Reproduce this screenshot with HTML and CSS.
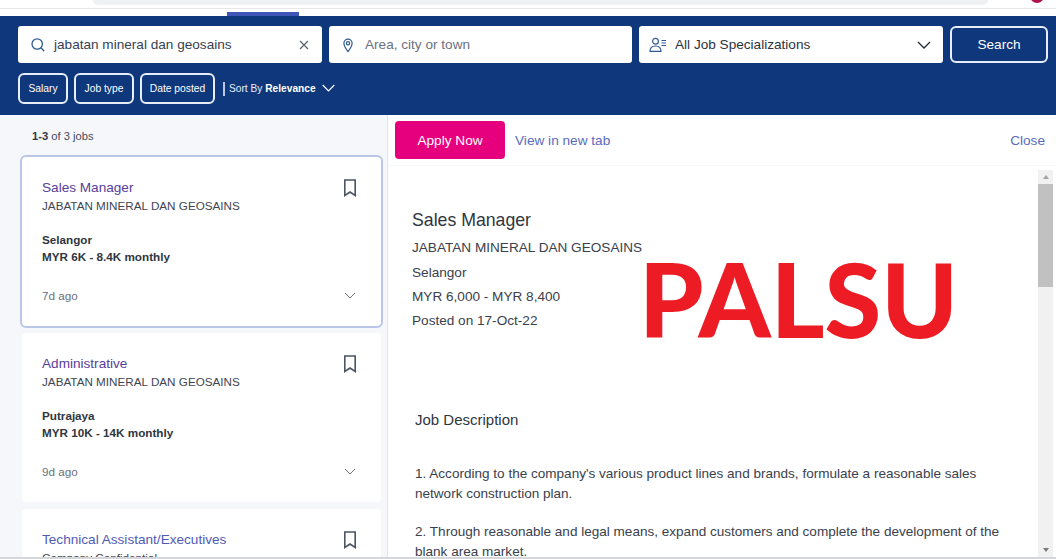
FILE: index.html
```html
<!DOCTYPE html>
<html lang="en">
<head>
<meta charset="utf-8">
<title>Job search</title>
<link rel="stylesheet" href="styles.css">
</head>
<body>
<div class="page">
  <div class="chrome">
    <div class="chrome-top">
      <div class="urlbar"></div>
      <div class="avatar"></div>
    </div>
    <div class="chrome-line"></div>
    <div class="tab-mark"></div>
  </div>

  <header class="band">
    <div class="search-row">
      <div class="field field-what">
        <svg class="ico" width="16" height="16" viewBox="0 0 16 16" fill="none" stroke="#2f5a92" stroke-width="1.3"><circle cx="7.2" cy="7" r="5.2"/><path d="M11 10.8l3.2 3.4"/></svg>
        <span class="field-text">jabatan mineral dan geosains</span>
        <svg class="clear" width="12" height="12" viewBox="0 0 12 12" fill="none" stroke="#5a6270" stroke-width="1.2"><path d="M2 2l8 8M10 2l-8 8"/></svg>
      </div>
      <div class="field field-where">
        <svg class="ico" width="16" height="16" viewBox="0 0 16 16" fill="none" stroke="#2f5a92" stroke-width="1.2"><path d="M8 14.6C5.6 11.4 3.9 9 3.9 6.2a4.1 4.1 0 0 1 8.2 0C12.100 9 10.400 11.400 8 14.600z"/><circle cx="8" cy="6.200" r="1.600"/></svg>
        <span class="field-text placeholder">Area, city or town</span>
      </div>
      <div class="field field-spec">
        <svg class="ico-spec" width="18" height="16" viewBox="0 0 18 16" fill="none" stroke="#2f5a92" stroke-width="1.2"><circle cx="6.500" cy="4.200" r="2.900"/><path d="M1 14.400c0-3.800 2.300-5.400 5.500-5.400s5.500 1.600 5.500 5.400z"/><path d="M12.500 3.500h4.500M12.500 6h4.500M12.500 8.500h4.500"/></svg>
        <span class="field-text spec-text">All Job Specializations</span>
        <svg class="spec-chev" width="14" height="8" viewBox="0 0 14 8" fill="none" stroke="#1f2a37" stroke-width="1.300"><path d="M1 1l6 6 6-6"/></svg>
      </div>
      <button class="search-btn">Search</button>
    </div>
    <div class="filter-row">
      <button class="chip chip-salary">Salary</button>
      <button class="chip chip-type">Job type</button>
      <button class="chip chip-date">Date posted</button>
      <span class="sep"></span>
      <span class="sort">Sort By <b>Relevance</b></span>
      <svg class="sort-chev" width="13" height="8" viewBox="0 0 13 8" fill="none" stroke="#fff" stroke-width="1.200"><path d="M.7 1l5.800 5.800L12.300 1"/></svg>
    </div>
  </header>

  <main class="main">
    <aside class="list">
      <p class="count"><b>1-3</b> of 3 jobs</p>

      <article class="card card-active">
        <div class="card-head">
          <a class="job-title visited">Sales Manager</a>
          <svg class="bookmark" width="14" height="18" viewBox="0 0 14 18" fill="none" stroke="#4b5563" stroke-width="1.600"><path d="M1.800 1h10.400v15.500L7 13l-5.200 3.500z"/></svg>
        </div>
        <p class="company">JABATAN MINERAL DAN GEOSAINS</p>
        <p class="meta first">Selangor</p>
        <p class="meta">MYR 6K - 8.4K monthly</p>
        <div class="card-foot">
          <span class="age">7d ago</span>
          <svg class="chev" width="12" height="7" viewBox="0 0 12 7" fill="none" stroke="#6b7280" stroke-width="1"><path d="M1 1l5 5 5-5"/></svg>
        </div>
      </article>

      <article class="card">
        <div class="card-head">
          <a class="job-title visited">Administrative</a>
          <svg class="bookmark" width="14" height="18" viewBox="0 0 14 18" fill="none" stroke="#4b5563" stroke-width="1.600"><path d="M1.800 1h10.400v15.500L7 13l-5.200 3.500z"/></svg>
        </div>
        <p class="company">JABATAN MINERAL DAN GEOSAINS</p>
        <p class="meta first">Putrajaya</p>
        <p class="meta">MYR 10K - 14K monthly</p>
        <div class="card-foot">
          <span class="age">9d ago</span>
          <svg class="chev" width="12" height="7" viewBox="0 0 12 7" fill="none" stroke="#6b7280" stroke-width="1"><path d="M1 1l5 5 5-5"/></svg>
        </div>
      </article>

      <article class="card">
        <div class="card-head">
          <a class="job-title">Technical Assistant/Executives</a>
          <svg class="bookmark" width="14" height="18" viewBox="0 0 14 18" fill="none" stroke="#4b5563" stroke-width="1.600"><path d="M1.800 1h10.400v15.500L7 13l-5.200 3.500z"/></svg>
        </div>
        <p class="company">Company Confidential</p>
      </article>
    </aside>

    <section class="detail">
      <div class="detail-head">
        <button class="apply">Apply Now</button>
        <a class="link new-tab">View in new tab</a>
        <a class="link close">Close</a>
      </div>
      <div class="detail-body">
        <div class="detail-content">
          <div class="summary">
            <h1 class="detail-title">Sales Manager</h1>
            <p class="summary-line summary-company">JABATAN MINERAL DAN GEOSAINS</p>
            <p class="summary-line">Selangor</p>
            <p class="summary-line">MYR 6,000 - MYR 8,400</p>
            <p class="summary-line">Posted on 17-Oct-22</p>
            <div class="stamp">PALSU</div>
          </div>
          <div class="description">
            <h2 class="desc-title">Job Description</h2>
            <p class="desc-text">1. According to the company's various product lines and brands, formulate a reasonable sales network construction plan.</p>
            <p class="desc-text">2. Through reasonable and legal means, expand customers and complete the development of the blank area market.</p>
          </div>
        </div>
        <div class="scrollbar">
          <span class="arrow arrow-up"></span>
          <span class="thumb"></span>
          <span class="arrow arrow-down"></span>
        </div>
      </div>
    </section>
  </main>
  <div class="bottom-line"></div>
</div>
</body>
</html>
```

FILE: styles.css
```css
* { box-sizing: border-box; }
html, body { margin: 0; padding: 0; height: 100%; overflow: hidden; background: #fff; }
body { font-family: "Liberation Sans", Arial, sans-serif; color: #2f3640; }
p, h1, h2 { margin: 0; font-weight: 400; }
button { font-family: inherit; cursor: pointer; }

.page { width: 1056px; height: 559px; display: flex; flex-direction: column; overflow: hidden; }

/* browser strip */
.chrome { height: 16px; flex: none; overflow: hidden; }
.chrome-top { height: 8px; display: flex; overflow: hidden; }
.urlbar { width: 895px; height: 5px; margin-left: 93px; background: #f0f1f3; border-bottom-left-radius: 8px; border-bottom-right-radius: 8px; }
.avatar { width: 14px; height: 14px; margin: -11px 0 0 42px; border-radius: 50%; background: #b0124f; flex: none; }
.chrome-line { height: 1px; background: #e8e8e8; }
.tab-mark { width: 72px; height: 4px; margin: 3px 0 0 227px; background: #3f56b8; }

/* search band */
.band { height: 99px; flex: none; background: #0f377c; padding: 10px 8px 0 18px; }
.search-row { display: flex; height: 37px; gap: 7px; }
.field { background: #fff; border-radius: 3px; display: flex; align-items: center; height: 37px; flex: none; }
.field-what { width: 304px; padding: 0 12px 0 12px; }
.field-where { width: 303px; padding: 0 0 0 11px; }
.field-spec { width: 304px; padding: 0 12px 0 10px; }
.ico { flex: none; }
.ico-spec { flex: none; }
.field-text { font-size: 13.6px; color: #374151; margin: -1px 0 0 8px; flex: 1; white-space: nowrap; }
.field-where .field-text { margin-left: 9px; }
.placeholder { color: #6b7280; }
.spec-text { color: #2b3340; margin-left: 8px; }
.clear, .spec-chev { flex: none; }
.search-btn { flex: none; width: 98px; height: 37px; background: #0f377c; color: #fff; border: 2px solid #e8eef8; border-radius: 6px; font-size: 13.65px; padding: 0 0 1px; }

.filter-row { display: flex; align-items: center; height: 31px; margin-top: 10px; }
.chip { flex: none; height: 31px; background: #0f377c; color: #fff; border: 2px solid #e8eef8; border-radius: 6px; font-size: 10.3px; padding: 0; margin-right: 6px; }
.chip-salary { width: 50px; }
.chip-type { width: 60px; }
.chip-date { width: 75px; margin-right: 8px; }
.sep { width: 2px; height: 14px; background: #b9c8e6; flex: none; }
.sort { font-size: 10.2px; color: #e8eef8; margin: -1px 0 0 4px; }
.sort b { color: #fff; font-weight: 700; }
.sort-chev { margin: -1px 0 0 6px; flex: none; }

/* main */
.main { flex: 1; display: flex; min-height: 0; }
.list { width: 387px; flex: none; background: #f5f7fb; padding: 0 4px 0 20px; overflow: hidden; }
.count { height: 40px; padding: 14px 0 0 12px; font-size: 11.2px; line-height: 15px; color: #444c59; }
.count b { font-weight: 700; color: #2f3640; }

.card { background: #fff; border-radius: 4px; margin: 0 2px 7px; padding: 22px 24px 23px 20px; }
.card-active { border: 2px solid #b9c6e8; border-radius: 6px; margin: 0 0 5px; padding: 22px 24px 23px 20px; }
.card-head { display: flex; justify-content: space-between; align-items: flex-start; height: 18px; }
.job-title { font-size: 13.6px; line-height: 18px; color: #4f5bb5; }
.job-title.visited { color: #57409a; }
.bookmark { flex: none; }
.company { font-size: 11.7px; line-height: 15px; color: #3f4652; margin-top: 1px; }
.meta { font-size: 11.7px; line-height: 17px; font-weight: 700; color: #2f3640; }
.meta.first { margin-top: 18px; }
.card-foot { display: flex; justify-content: space-between; align-items: center; margin-top: 23px; height: 15px; }
.age { font-size: 11.7px; color: #6b7280; }
.chev { flex: none; margin-right: 1px; }

/* detail */
.detail { flex: 1; min-width: 0; display: flex; flex-direction: column; border-left: 1px solid #dfe5f2; }
.detail-head { height: 51px; flex: none; display: flex; align-items: center; padding: 0 11px 0 7px; border-bottom: 1px solid #f6f7fa; }
.apply { width: 110px; height: 38px; margin-top: -1px; background: #e6007e; color: #fff; border: 0; border-radius: 4px; font-size: 13.65px; padding: 1px 0 0; }
.link { font-size: 13.65px; color: #5a6cbd; }
.new-tab { margin-left: 10px; }
.close { margin-left: auto; }

.detail-body { flex: 1; min-height: 0; display: flex; }
.detail-content { flex: 1; min-width: 0; overflow: hidden; }
.summary { position: relative; padding: 44px 0 0 24px; height: 240px; }
.detail-title { font-size: 17.7px; line-height: 20px; color: #2f3640; margin-bottom: 6px; }
.summary-line { font-size: 13.6px; line-height: 24px; color: #3a414d; }
.summary-company { margin-bottom: 1px; }
.stamp { position: absolute; left: 251px; top: 72px; font-family: Lato, "Open Sans", sans-serif; font-weight: 900; font-size: 103px; line-height: 120px; color: #ed1c24; white-space: nowrap; }
.description { padding: 4px 30px 0 27px; }
.desc-title { font-size: 15px; line-height: 20px; color: #2f3640; margin-bottom: 34px; }
.desc-text { font-size: 13.55px; line-height: 20px; color: #3a414d; margin-bottom: 18px; }

.scrollbar { width: 15px; flex: none; margin: 4px 3px 0 0; background: #f1f1f1; display: flex; flex-direction: column; align-items: stretch; }
.arrow { height: 14px; flex: none; display: flex; justify-content: center; }
.arrow::before { content: ""; width: 0; height: 0; border-left: 3.500px solid transparent; border-right: 3.500px solid transparent; margin-top: 5px; }
.arrow-up::before { border-bottom: 4px solid #a3a3a3; }
.arrow-down { margin-top: auto; }
.arrow-down::before { border-top: 4px solid #7a7a7a; }
.thumb { height: 103px; background: #c1c1c1; flex: none; }

.bottom-line { height: 2px; flex: none; background: #d4d6da; }
```
